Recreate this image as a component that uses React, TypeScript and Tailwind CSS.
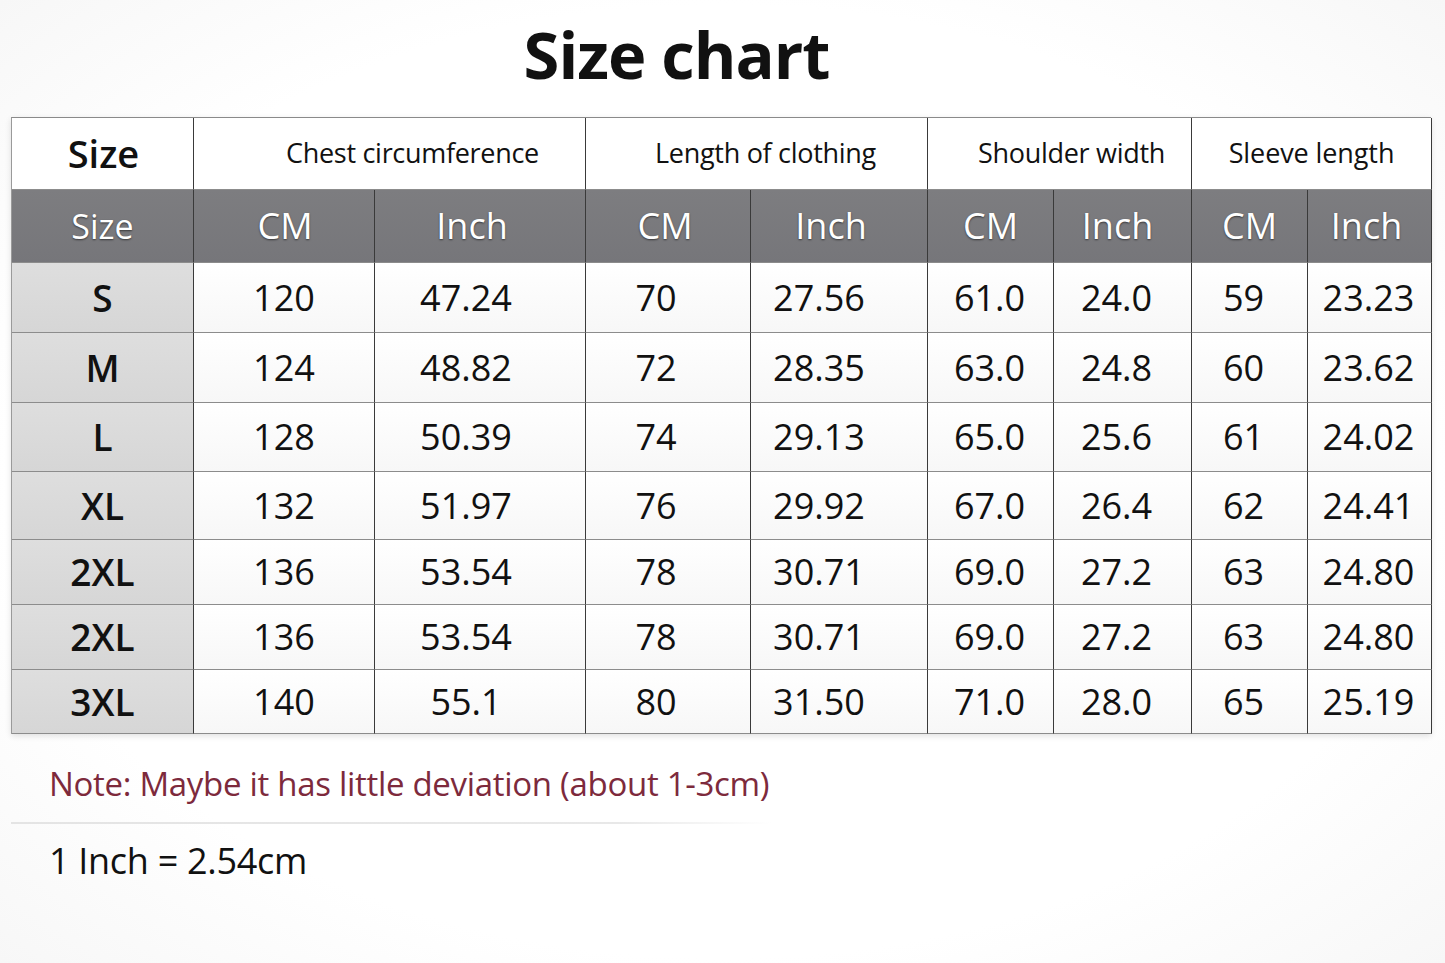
import React from "react";

const font = { fontFamily: '"Open Sans", "Noto Sans", sans-serif' };

const rows: { size: string; h: string; v: string[] }[] = [
  { size: "S", h: "h-[70px]", v: ["120", "47.24", "70", "27.56", "61.0", "24.0", "59", "23.23"] },
  { size: "M", h: "h-[70px]", v: ["124", "48.82", "72", "28.35", "63.0", "24.8", "60", "23.62"] },
  { size: "L", h: "h-[69px]", v: ["128", "50.39", "74", "29.13", "65.0", "25.6", "61", "24.02"] },
  { size: "XL", h: "h-[68px]", v: ["132", "51.97", "76", "29.92", "67.0", "26.4", "62", "24.41"] },
  { size: "2XL", h: "h-[65px]", v: ["136", "53.54", "78", "30.71", "69.0", "27.2", "63", "24.80"] },
  { size: "2XL", h: "h-[65px]", v: ["136", "53.54", "78", "30.71", "69.0", "27.2", "63", "24.80"] },
  { size: "3XL", h: "h-[64px]", v: ["140", "55.1", "80", "31.50", "71.0", "28.0", "65", "25.19"] },
];

const dataPad = [
  "pr-0",
  "pr-[28px]",
  "pr-[24px]",
  "pr-[40px]",
  "pr-[2px]",
  "pr-[12px]",
  "pr-[12px]",
  "pr-[2px]",
];

const subPad = [
  "pl-[2px]",
  "pr-[16px]",
  "pr-[6px]",
  "pr-[16px]",
  "pr-0",
  "pr-[10px]",
  "pr-0",
  "pr-[6px]",
];

const subLabels = ["CM", "Inch", "CM", "Inch", "CM", "Inch", "CM", "Inch"];

const cellBase =
  "flex items-center justify-center border-r border-b border-r-[#3a3a3a] border-b-[#8c8c8c]";

export default function App() {
  return (
    <div
      className="w-[1445px] h-[963px] bg-[radial-gradient(ellipse_at_center,#ffffff_70%,#f7f7f7_100%)] flex flex-col"
      style={font}
    >
      <h1 className="text-[65px] leading-none font-bold text-[#111] text-center pt-[22px] pb-[30px] pr-[92px] tracking-[-1px]">
        Size chart
      </h1>

      <div className="ml-[11px] w-[1420px] border-l border-t border-l-[#9a9a9a] border-t-[#8a8a8a] grid grid-cols-[182px_181px_211px_165px_177px_126px_138px_116px_124px] shadow-[0_2px_6px_rgba(0,0,0,0.12)]">
        {/* header row 1 */}
        <div className={`${cellBase} h-[72px] bg-white text-[38px] font-semibold text-[#111] pl-[2px]`}>
          Size
        </div>
        <div className={`${cellBase} col-span-2 h-[72px] bg-white text-[27px] text-[#111] pl-[46px] tracking-[-0.3px]`}>
          Chest circumference
        </div>
        <div className={`${cellBase} col-span-2 h-[72px] bg-white text-[27px] text-[#111] pl-[18px] tracking-[-0.3px]`}>
          Length of clothing
        </div>
        <div className={`${cellBase} col-span-2 h-[72px] bg-white text-[27px] text-[#111] pl-[24px] tracking-[-0.3px]`}>
          Shoulder width
        </div>
        <div className={`${cellBase} col-span-2 h-[72px] bg-white text-[27px] text-[#111] tracking-[-0.1px]`}>
          Sleeve length
        </div>

        {/* header row 2 */}
        <div
          className={`${cellBase} h-[73px] bg-[linear-gradient(180deg,#7d7d80,#76767a)] text-white text-[34px] font-medium [text-shadow:0_1px_2px_rgba(0,0,0,0.55)] border-b-[#4a4a4a]`}
        >
          Size
        </div>
        {subLabels.map((l, i) => (
          <div
            key={i}
            className={`${cellBase} ${subPad[i]} h-[73px] bg-[linear-gradient(180deg,#7d7d80,#76767a)] text-white text-[36px] font-medium [text-shadow:0_1px_2px_rgba(0,0,0,0.55)] border-b-[#4a4a4a]`}
          >
            {l}
          </div>
        ))}

        {/* data rows */}
        {rows.map((r, ri) => (
          <React.Fragment key={ri}>
            <div
              className={`${cellBase} ${r.h} bg-[linear-gradient(180deg,#dedede,#d6d6d6)] text-[37px] font-semibold text-[#111]`}
            >
              {r.size}
            </div>
            {r.v.map((val, ci) => (
              <div
                key={ci}
                className={`${cellBase} ${dataPad[ci]} ${r.h} bg-[linear-gradient(180deg,#ffffff,#f7f7f7)] text-[36px] text-[#111]`}
              >
                {val}
              </div>
            ))}
          </React.Fragment>
        ))}
      </div>

      <div className="ml-[11px] w-[760px] mt-[28px]">
        <p className="pl-[38px] text-[33px] leading-[44px] text-[#7d2a3c] tracking-[-0.3px]">
          Note: Maybe it has little deviation (about 1-3cm)
        </p>
        <div className="mt-[16px] h-[2px] bg-[linear-gradient(90deg,#e4e4e4,#e8e8e8_80%,rgba(232,232,232,0))]" />
        <p className="pl-[38px] mt-[15px] text-[36px] leading-[44px] text-[#111] tracking-[-0.3px]">
          1 Inch = 2.54cm
        </p>
      </div>
    </div>
  );
}
